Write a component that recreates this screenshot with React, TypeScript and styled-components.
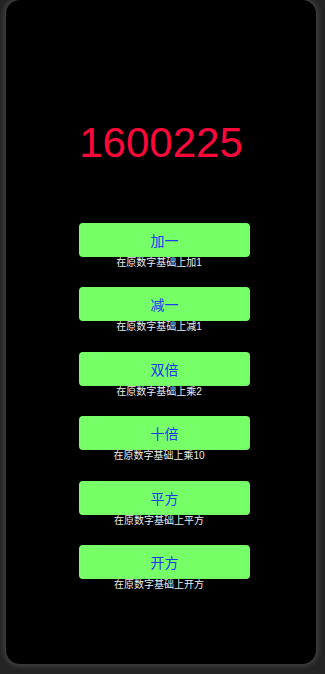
import styled, { createGlobalStyle } from "styled-components";

const GlobalStyle = createGlobalStyle`
  html, body {
    margin: 0;
    padding: 0;
    background: #262626;
  }
  #root {
    width: 325px;
    height: 674px;
  }
`;

const Page = styled("div")`
  box-sizing: border-box;
  width: 325px;
  height: 674px;
  padding: 0 9px 10px 6px;
  background: #232323;
`;

const Frame = styled("div")`
  box-sizing: border-box;
  height: 664px;
  background: #000;
  border-radius: 14px;
  box-shadow: 0 0 4px 3px #3c3c3c;
  display: flex;
  flex-direction: column;
  align-items: center;
  padding-top: 122px;
`;

const Counter = styled("div")`
  font-family: "Liberation Sans", Arial, sans-serif;
  font-size: 42px;
  line-height: 42px;
  color: #ff073a;
  margin-bottom: 59px;
`;

const Actions = styled("div")`
  display: flex;
  flex-direction: column;
  align-items: center;
  gap: 18.4px;
  width: 100%;
`;

const Action = styled("div")`
  display: flex;
  flex-direction: column;
  align-items: center;
`;

const Button = styled("button")`
  box-sizing: border-box;
  width: 171px;
  height: 34px;
  margin: 0 0 0 7px;
  padding: 0;
  border: none;
  border-radius: 4px;
  background: #76ff66;
  color: #2038f0;
  font-family: "Noto Sans CJK SC", "Liberation Sans", sans-serif;
  font-size: 14px;
  cursor: pointer;
`;

const Caption = styled("div")`
  margin-right: 4px;
  font-family: "Liberation Sans", "Noto Sans CJK SC", sans-serif;
  font-size: 10px;
  line-height: 12px;
  color: #eeeeee;
`;

const actions = [
  { label: "加一", note: "在原数字基础上加1" },
  { label: "减一", note: "在原数字基础上减1" },
  { label: "双倍", note: "在原数字基础上乘2" },
  { label: "十倍", note: "在原数字基础上乘10" },
  { label: "平方", note: "在原数字基础上平方" },
  { label: "开方", note: "在原数字基础上开方" },
];

const App = () => {
  return (
    <Page>
      <GlobalStyle />
      <Frame>
        <Counter>1600225</Counter>
        <Actions>
          {actions.map((a) => (
            <Action key={a.label}>
              <Button>{a.label}</Button>
              <Caption>{a.note}</Caption>
            </Action>
          ))}
        </Actions>
      </Frame>
    </Page>
  );
};

export default App;
